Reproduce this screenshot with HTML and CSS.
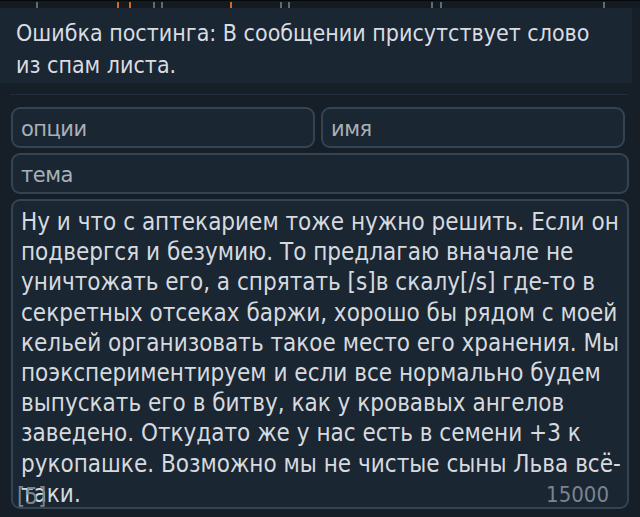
FILE: index.html
```html
<!DOCTYPE html>
<html lang="ru">
<head>
<meta charset="utf-8">
<link rel="stylesheet" href="styles.css">
</head>
<body>
<div class="topbar"></div>
<div class="notice">Ошибка постинга: В сообщении присутствует слово<br>из спам листа.</div>
<div class="divider"></div>
<div class="form">
  <div class="row">
    <div class="field"><span class="ph">опции</span></div>
    <div class="field"><span class="ph">имя</span></div>
  </div>
  <div class="field wide"><span class="ph">тема</span></div>
  <div class="message">
    <div class="text">Ну и что с аптекарием тоже нужно решить. Если он<br>подвергся и безумию. То предлагаю вначале не<br>уничтожать его, а спрятать [s]в скалу[/s] где-то в<br>секретных отсеках баржи, хорошо бы рядом с моей<br>кельей организовать такое место его хранения. Мы<br>поэкспериментируем и если все нормально будем<br>выпускать его в битву, как у кровавых ангелов<br>заведено. Откудато же у нас есть в семени +3 к<br>рукопашке. Возможно мы не чистые сыны Льва всё-<br>таки.</div>
    <span class="tag">[5]</span>
    <span class="count">15000</span>
  </div>
</div>
</body>
</html>
```
FILE: styles.css
```css
html, body {
  margin: 0;
  padding: 0;
}
body {
  width: 640px;
  height: 517px;
  overflow: hidden;
  background: #161e27;
  font-family: "DejaVu Sans Condensed", "DejaVu Sans", sans-serif;
  font-stretch: condensed;
  color: #d6dadf;
}
.topbar {
  height: 7px;
  border-top: 1px solid #05080b;
  background:
    linear-gradient(#5e6a75, #5e6a75) 36px 1px / 2px 6px no-repeat,
    linear-gradient(#d06a1e, #d06a1e) 117px 1px / 2px 6px no-repeat,
    linear-gradient(#d06a1e, #d06a1e) 129px 1px / 2px 6px no-repeat,
    linear-gradient(#5e6a75, #5e6a75) 153px 1px / 2px 6px no-repeat,
    linear-gradient(#5e6a75, #5e6a75) 161px 1px / 2px 6px no-repeat,
    linear-gradient(#d06a1e, #d06a1e) 230px 1px / 2px 6px no-repeat,
    linear-gradient(#5e6a75, #5e6a75) 280px 1px / 2px 6px no-repeat,
    linear-gradient(#5e6a75, #5e6a75) 288px 1px / 2px 6px no-repeat,
    linear-gradient(#5e6a75, #5e6a75) 431px 1px / 2px 6px no-repeat,
    linear-gradient(#5e6a75, #5e6a75) 440px 1px / 2px 6px no-repeat,
    linear-gradient(#5e6a75, #5e6a75) 603px 1px / 2px 6px no-repeat,
    #131a21;
}
.notice {
  width: 632px;
  box-sizing: border-box;
  height: 75px;
  padding: 9px 16px 0;
  background: #1b2633;
  font-size: 23px;
  line-height: 32px;
  color: #d9dde1;
}
.divider {
  height: 1px;
  margin: 11px 12px 0 10px;
  background: #222d39;
}
.form {
  padding: 12px 11px 0;
  display: flex;
  flex-direction: column;
  gap: 5px;
}
.row {
  display: grid;
  grid-template-columns: 304px 304px;
  gap: 6px;
}
.field {
  height: 41px;
  box-sizing: border-box;
  border: 2px solid #354452;
  border-radius: 9px;
  background: #1b2633;
  padding: 0 8px;
  display: flex;
  align-items: center;
}
.field.wide {
  width: 618px;
}
.ph {
  font-size: 21px;
  color: #a9b0b7;
  font-family: "DejaVu Sans", sans-serif;
  font-stretch: normal;
  letter-spacing: -0.5px;
  padding-top: 2px;
}
.message {
  position: relative;
  width: 618px;
  height: 310px;
  box-sizing: border-box;
  border: 2px solid #354452;
  border-radius: 9px;
  background: #1b2633;
  padding: 6px 8px 0;
}
.text {
  font-size: 24px;
  line-height: 30.2px;
  white-space: nowrap;
  color: #d6dadf;
}
.tag {
  position: absolute;
  left: 4px;
  bottom: -3px;
  font-size: 23px;
  line-height: 28px;
  color: #7b848d;
}
.count {
  position: absolute;
  right: 18px;
  bottom: -1px;
  font-size: 22px;
  line-height: 26px;
  color: #7b848d;
}
```
